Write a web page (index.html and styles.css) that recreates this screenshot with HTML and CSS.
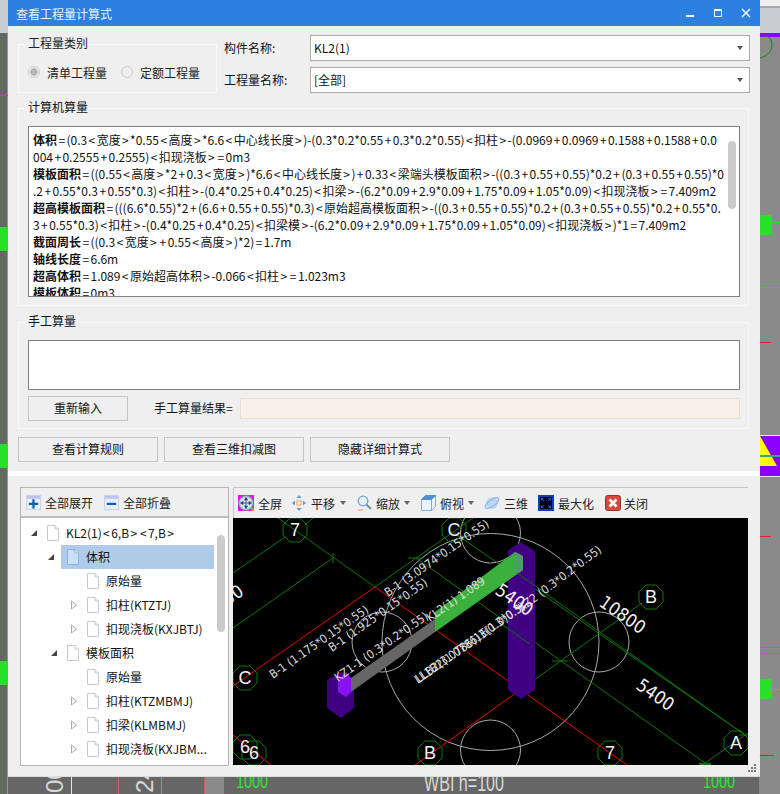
FILE: index.html
```html
<!DOCTYPE html>
<html lang="zh">
<head>
<meta charset="utf-8">
<title>查看工程量计算式</title>
<link rel="stylesheet" href="styles.css">
</head>
<body>
<svg width="0" height="0" class="defs">
  <symbol id="doc" viewBox="0 0 14 16">
    <path d="M1.5 .5H9L12.5 4V15.5H1.5Z" fill="#fff" stroke="#c3cad6"/>
    <path d="M9 .5V4H12.5" fill="#eef1f6" stroke="#c3cad6"/>
  </symbol>
  <symbol id="docsel" viewBox="0 0 14 16">
    <path d="M1.5 .5H9L12.5 4V15.5H1.5Z" fill="#c9e0f5" stroke="#8fb2d4"/>
    <path d="M9 .5V4H12.5" fill="#e6f1fb" stroke="#8fb2d4"/>
  </symbol>
  <symbol id="open" viewBox="0 0 8 8"><path d="M7 1V7H1Z" fill="#444"/></symbol>
  <symbol id="closed" viewBox="0 0 8 10"><path d="M1.5 1 6.5 5 1.5 9Z" fill="#fff" stroke="#aaa"/></symbol>
</svg>

<svg class="backdrop" viewBox="0 0 780 794">
  <rect width="780" height="794" fill="#8a8a8a"/>
  <rect x="0" y="0" width="8" height="33" fill="#c9cdd2"/>
  <rect x="0" y="33" width="8" height="761" fill="#666"/>
  <rect x="7" y="33" width="1" height="761" fill="#2fdc2f"/>
  <rect x="0" y="95" width="8" height="1" fill="#e020e0"/>
  <rect x="0" y="227" width="8" height="24" fill="#28e028"/>
  <rect x="0" y="444" width="8" height="24" fill="#28e028"/>
  <rect x="0" y="661" width="8" height="24" fill="#28e028"/>
  <rect x="760" y="0" width="20" height="6" fill="#f0f0f0"/>
  <rect x="760" y="6" width="20" height="2" fill="#a8a8a8"/>
  <rect x="760" y="8" width="20" height="25" fill="#c9cdd2"/>
  <rect x="760" y="33" width="20" height="4" fill="#8c00ff"/>
  <path d="M763 35Q773 37 772 46 771 55 760 58" fill="none" stroke="#128a12"/>
  <rect x="760" y="215" width="12" height="20" fill="#28e028"/>
  <rect x="772" y="222" width="8" height="1" fill="#28e028"/>
  <rect x="760" y="287" width="20" height="1" fill="#28dc28"/>
  <rect x="760" y="342" width="11" height="1" fill="#e82020"/>
  <rect x="760" y="435" width="20" height="1" fill="#eee"/>
  <rect x="760" y="436" width="20" height="40" fill="#8c00ff"/>
  <path d="M760 436 777 466H760Z" fill="#ffff00"/>
  <rect x="760" y="455" width="20" height="2" fill="#2fb070"/>
  <rect x="760" y="476" width="20" height="1" fill="#eee"/>
  <rect x="760" y="536" width="11" height="1" fill="#e82020"/>
  <rect x="760" y="647" width="20" height="1" fill="#e040e0"/>
  <rect x="760" y="653" width="20" height="1" fill="#e040e0"/>
  <rect x="760" y="679" width="12" height="20" fill="#28e028"/>
  <rect x="772" y="689" width="8" height="1" fill="#28e028"/>
  <rect x="760" y="755" width="14" height="1" fill="#e82020"/>
  <rect x="8" y="777" width="751" height="17" fill="#666"/>
  <rect x="204" y="777" width="20" height="17" fill="#8a8a8a"/>
  <rect x="71" y="777" width="1" height="17" fill="#dfe6df"/>
  <rect x="118" y="777" width="1" height="17" fill="#d06060"/>
  <rect x="161" y="777" width="1" height="17" fill="#2fdc2f"/>
  <rect x="204" y="777" width="1" height="17" fill="#d06060"/>
  <text x="236" y="788" class="bg-green" textLength="32" lengthAdjust="spacingAndGlyphs">1000</text>
  <text x="703" y="788" class="bg-green" textLength="32" lengthAdjust="spacingAndGlyphs">1000</text>
  <text x="424" y="791" class="bg-white" textLength="80" lengthAdjust="spacingAndGlyphs">WBI h=100</text>
  <text transform="translate(63 793) rotate(-90)" class="bg-white">00</text>
  <text transform="translate(153 793) rotate(-90)" class="bg-white">24</text>
</svg>

<div class="window">
  <header class="titlebar">
    <span class="title">查看工程量计算式</span>
    <div class="winbtns">
      <svg width="10" height="10" viewBox="0 0 10 10"><rect x="1" y="7" width="8" height="2" fill="#fff"/></svg>
      <svg width="10" height="10" viewBox="0 0 10 10"><path d="M1.5 1.5H8.5V8.5H1.5Z" fill="none" stroke="#fff"/><rect x="1" y="1" width="8" height="2" fill="#fff"/></svg>
      <svg width="10" height="10" viewBox="0 0 10 10"><path d="M1 1 9 9M9 1 1 9" stroke="#fff" stroke-width="1.4"/></svg>
    </div>
  </header>

  <div class="content">
    <div class="top">
      <div class="group type-group">
        <span class="legend">工程量类别</span>
        <label class="radio"><i class="dot checked"></i>清单工程量</label>
        <label class="radio"><i class="dot"></i>定额工程量</label>
      </div>
      <div class="fields">
        <div class="field"><span class="field-label">构件名称:</span><div class="combo"><span>KL2(1)</span><i class="caret"></i></div></div>
        <div class="field"><span class="field-label">工程量名称:</span><div class="combo"><span>[全部]</span><i class="caret"></i></div></div>
      </div>
    </div>

    <div class="group calc-group">
      <span class="legend">计算机算量</span>
      <div class="formula">
        <p><b>体积</b><u>=</u>(0.3<u>&lt;</u>宽度<u>&gt;</u>*0.55<u>&lt;</u>高度<u>&gt;</u>*6.6<u>&lt;</u>中心线长度<u>&gt;</u>)-(0.3*0.2*0.55<u>+</u>0.3*0.2*0.55)<u>&lt;</u>扣柱<u>&gt;</u>-(0.0969<u>+</u>0.0969<u>+</u>0.1588<u>+</u>0.1588<u>+</u>0.0</p>
        <p>004<u>+</u>0.2555<u>+</u>0.2555)<u>&lt;</u>扣现浇板<u>&gt;</u><u>=</u>0m3</p>
        <p><b>模板面积</b><u>=</u>((0.55<u>&lt;</u>高度<u>&gt;</u>*2<u>+</u>0.3<u>&lt;</u>宽度<u>&gt;</u>)*6.6<u>&lt;</u>中心线长度<u>&gt;</u>)<u>+</u>0.33<u>&lt;</u>梁端头模板面积<u>&gt;</u>-((0.3<u>+</u>0.55<u>+</u>0.55)*0.2<u>+</u>(0.3<u>+</u>0.55<u>+</u>0.55)*0</p>
        <p>.2<u>+</u>0.55*0.3<u>+</u>0.55*0.3)<u>&lt;</u>扣柱<u>&gt;</u>-(0.4*0.25<u>+</u>0.4*0.25)<u>&lt;</u>扣梁<u>&gt;</u>-(6.2*0.09<u>+</u>2.9*0.09<u>+</u>1.75*0.09<u>+</u>1.05*0.09)<u>&lt;</u>扣现浇板<u>&gt;</u><u>=</u>7.409m2</p>
        <p><b>超高模板面积</b><u>=</u>(((6.6*0.55)*2<u>+</u>(6.6<u>+</u>0.55<u>+</u>0.55)*0.3)<u>&lt;</u>原始超高模板面积<u>&gt;</u>-((0.3<u>+</u>0.55<u>+</u>0.55)*0.2<u>+</u>(0.3<u>+</u>0.55<u>+</u>0.55)*0.2<u>+</u>0.55*0.</p>
        <p>3<u>+</u>0.55*0.3)<u>&lt;</u>扣柱<u>&gt;</u>-(0.4*0.25<u>+</u>0.4*0.25)<u>&lt;</u>扣梁模<u>&gt;</u>-(6.2*0.09<u>+</u>2.9*0.09<u>+</u>1.75*0.09<u>+</u>1.05*0.09)<u>&lt;</u>扣现浇板<u>&gt;</u>)*1<u>=</u>7.409m2</p>
        <p><b>截面周长</b><u>=</u>((0.3<u>&lt;</u>宽度<u>&gt;</u><u>+</u>0.55<u>&lt;</u>高度<u>&gt;</u>)*2)<u>=</u>1.7m</p>
        <p><b>轴线长度</b><u>=</u>6.6m</p>
        <p><b>超高体积</b><u>=</u>1.089<u>&lt;</u>原始超高体积<u>&gt;</u>-0.066<u>&lt;</u>扣柱<u>&gt;</u><u>=</u>1.023m3</p>
        <p><b>模板体积</b><u>=</u>0m3</p>
        <i class="vscroll formula-scroll"></i>
      </div>
    </div>

    <div class="group manual-group">
      <span class="legend">手工算量</span>
      <div class="manual-input"></div>
      <div class="manual-row">
        <button class="btn reset-btn">重新输入</button>
        <span class="result-label">手工算量结果=</span>
        <div class="result-field"></div>
      </div>
    </div>

    <div class="actions">
      <button class="btn action-btn">查看计算规则</button>
      <button class="btn action-btn">查看三维扣减图</button>
      <button class="btn action-btn">隐藏详细计算式</button>
    </div>
  </div>

  <div class="divider"></div>

  <div class="lower">
    <section class="tree-pane">
      <div class="toolbar tree-toolbar">
        <span class="tool tool-expand">
          <svg width="15" height="15" viewBox="0 0 16 16"><rect width="16" height="16" fill="#fff"/><rect x=".5" y=".5" width="15" height="15" fill="#e8eefb" stroke="#c4d0ee"/><rect x="1" y="1" width="14" height="3" fill="#b9c5ee"/><path d="M3 9.5H13M8 4.5V14.5" stroke="#0a5fae" stroke-width="2.4"/></svg>
          全部展开
        </span>
        <span class="tool tool-collapse">
          <svg width="15" height="15" viewBox="0 0 16 16"><rect width="16" height="16" fill="#fff"/><rect x=".5" y=".5" width="15" height="15" fill="#e8eefb" stroke="#c4d0ee"/><rect x="1" y="1" width="14" height="3" fill="#b9c5ee"/><path d="M3 9.5H13" stroke="#0a5fae" stroke-width="2.4"/></svg>
          全部折叠
        </span>
      </div>
      <div class="tree">
        <div class="row lv0"><svg class="tw"><use href="#open"/></svg><svg class="doc"><use href="#doc"/></svg><span>KL2(1)<u>&lt;</u>6,B<u>&gt;</u><u>&lt;</u>7,B<u>&gt;</u></span></div>
        <div class="row lv1 selected"><svg class="tw"><use href="#open"/></svg><svg class="doc"><use href="#docsel"/></svg><span>体积</span></div>
        <div class="row lv2"><i class="tw"></i><svg class="doc"><use href="#doc"/></svg><span>原始量</span></div>
        <div class="row lv2"><svg class="tw"><use href="#closed"/></svg><svg class="doc"><use href="#doc"/></svg><span>扣柱(KTZTJ)</span></div>
        <div class="row lv2"><svg class="tw"><use href="#closed"/></svg><svg class="doc"><use href="#doc"/></svg><span>扣现浇板(KXJBTJ)</span></div>
        <div class="row lv1"><svg class="tw"><use href="#open"/></svg><svg class="doc"><use href="#doc"/></svg><span>模板面积</span></div>
        <div class="row lv2"><i class="tw"></i><svg class="doc"><use href="#doc"/></svg><span>原始量</span></div>
        <div class="row lv2"><svg class="tw"><use href="#closed"/></svg><svg class="doc"><use href="#doc"/></svg><span>扣柱(KTZMBMJ)</span></div>
        <div class="row lv2"><svg class="tw"><use href="#closed"/></svg><svg class="doc"><use href="#doc"/></svg><span>扣梁(KLMBMJ)</span></div>
        <div class="row lv2"><svg class="tw"><use href="#closed"/></svg><svg class="doc"><use href="#doc"/></svg><span>扣现浇板(KXJBM...</span></div>
        <i class="vscroll tree-scroll"></i>
      </div>
    </section>

    <section class="view-pane">
      <div class="toolbar view-toolbar">
        <span class="tool t-full">
          <svg width="16" height="16" viewBox="0 0 16 16"><rect width="16" height="16" fill="#f0f"/><circle cx="8" cy="8" r="7.5" fill="#b9c4d8" stroke="#6d7a92"/><circle cx="8" cy="8" r="5.5" fill="#dde4ef"/><path d="M8 3V13M3 8H13M8 2.5 6.5 5H9.5ZM8 13.5 6.5 11H9.5ZM2.5 8 5 6.5V9.5ZM13.5 8 11 6.5V9.5Z" fill="#27477e" stroke="#27477e" stroke-width=".8"/><rect x="13" y="13" width="3" height="3" fill="#d89030"/></svg>
          全屏
        </span>
        <span class="tool t-pan">
          <svg width="14" height="16" viewBox="0 0 14 16"><rect x="5" y="6" width="4" height="4" fill="#fff" stroke="#ec9a4e"/><path d="M7 0 9.5 3H4.5ZM7 16 9.5 13H4.5ZM0 8 3 5.5V10.5ZM14 8 11 5.5V10.5Z" fill="#5a9bdc"/></svg>
          平移<i class="caret small"></i>
        </span>
        <span class="tool t-zoom">
          <svg width="15" height="16" viewBox="0 0 15 16"><circle cx="6" cy="6" r="4.8" fill="#e6f1fb" stroke="#6ea4dc" stroke-width="1.3"/><path d="M9.5 9.5 14 14" stroke="#7a8aa0" stroke-width="1.8"/><path d="M1 15H6" stroke="#ec9a4e"/></svg>
          缩放<i class="caret small"></i>
        </span>
        <span class="tool t-top">
          <svg width="15" height="16" viewBox="0 0 15 16"><path d="M.5 4.5H10.5V15.5H.5ZM10.5 4.5 14.5 .5V11.5L10.5 15.5" fill="#eaf3fc" stroke="#7fa9d8"/><path d="M.5 4.5 4.5 .5H14.5L10.5 4.5Z" fill="#4f8fd8" stroke="#4f8fd8"/></svg>
          俯视<i class="caret small"></i>
        </span>
        <span class="tool t-3d">
          <svg width="16" height="16" viewBox="0 0 16 16"><circle cx="8" cy="8" r="6" fill="#bcd6f2"/><ellipse cx="8" cy="8" rx="8" ry="3.2" transform="rotate(-35 8 8)" fill="none" stroke="#8fb6e2" stroke-width="1.2"/></svg>
          三维
        </span>
        <span class="tool t-max">
          <svg width="16" height="16" viewBox="0 0 16 16"><rect width="16" height="16" fill="#000"/><rect x="1" y="1" width="14" height="14" fill="none" stroke="#0a3fc0" stroke-width="2"/><path d="M3.5 3.5 6 6M12.5 3.5 10 6M3.5 12.5 6 10M12.5 12.5 10 10" stroke="#1c60d8"/><path d="M3 3H6L3 6ZM13 3H10L13 6ZM3 13H6L3 10ZM13 13H10L13 10Z" fill="#1c60d8"/></svg>
          最大化
        </span>
        <span class="tool t-close">
          <svg width="16" height="16" viewBox="0 0 16 16"><rect x=".5" y=".5" width="15" height="15" rx="2" fill="#d8483c" stroke="#8a3a34"/><path d="M4.5 4.5 11.5 11.5M11.5 4.5 4.5 11.5" stroke="#fff" stroke-width="2.6"/></svg>
          关闭
        </span>
      </div>

      <svg class="cad" viewBox="233 518 515 247">
        <g class="c-white" fill="none">
          <circle cx="490.5" cy="642" r="108.5"/>
          <circle cx="382" cy="642" r="30"/>
          <circle cx="599" cy="642" r="30"/>
          <circle cx="490.5" cy="533" r="30"/>
          <circle cx="490.5" cy="750" r="30"/>
        </g>
        <g class="c-green" fill="none">
          <path d="M278 518 375 587"/>
          <path d="M375 587 473 518"/>
          <path d="M520 690 642 603"/>
          <path d="M233 573 285 537M305 525 313 518"/>
          <path d="M233 628 333 558M333 553V563"/>
          <path d="M416 558 705 763"/>
          <path d="M453 532 745 735"/>
          <path d="M705 763 748 733"/>
          <path d="M408 558H424M552 661H568M739 735H748"/>
          <path d="M699 764H711" stroke-width="2"/>
        </g>
        <g class="c-red" fill="none">
          <path d="M375 587 627 765"/>
          <path d="M233 686 375 587"/>
          <path d="M415 765 520 690"/>
          <path d="M233 735 271 765"/>
        </g>
        <path d="M508 550 521 542 535 551V690L521 699 508 690Z" fill="#3f0082"/>
        <path d="M327 680 341 672 354 680V708L341 718 327 708Z" fill="#3f0082"/>
        <path d="M338 680 346 672 351 678V692L346 697 338 692Z" fill="#8a10f5"/>
        <path d="M351 678 435 619V632L351 692Z" fill="#666"/>
        <path d="M435 612 515 552 523 556V570L435 632Z" fill="#3cb03c"/>
        <path d="M515 552 523 556V570L516 575Z" fill="#4f9a6f"/>
        <path d="M517 573 745 735M500 623 530 644" class="c-green" fill="none"/>
        <g>
          <polygon class="oct" points="300,518 307,525 307,535 300,542 290,542 283,535 283,525 290,518"/>
          <polygon class="oct" points="459,518 466,525 466,535 459,542 449,542 442,535 442,525 449,518"/>
          <polygon class="oct" points="250,666 257,673 257,683 250,690 240,690 233,683 233,673 240,666"/>
          <polygon class="oct" points="250,735 257,742 257,752 250,759 240,759 233,752 233,742 240,735"/>
          <polygon class="oct" points="259,741 266,748 266,758 259,765 249,765 242,758 242,748 249,741"/>
          <polygon class="oct" points="435,741 442,748 442,758 435,765 425,765 418,758 418,748 425,741"/>
          <polygon class="oct" points="656,585 663,592 663,602 656,609 646,609 639,602 639,592 646,585"/>
          <polygon class="oct" points="741,731 748,738 748,748 741,755 731,755 724,748 724,738 731,731"/>
          <polygon class="oct" points="615,741 622,748 622,758 615,765 605,765 598,758 598,748 605,741"/>
        </g>
        <g class="c-label">
          <text x="295" y="536">7</text>
          <text x="454" y="536">C</text>
          <text x="245" y="684">C</text>
          <text x="245" y="753">6</text>
          <text x="254" y="759">6</text>
          <text x="430" y="759">B</text>
          <text x="651" y="603">B</text>
          <text x="736" y="749">A</text>
          <text x="610" y="759">7</text>
        </g>
        <g class="c-small">
          <text transform="translate(273 679) rotate(-35)">B-1 (1.175*0.15*0.55)</text>
          <text transform="translate(332 652) rotate(-35)">B-1 (1.925*0.15*0.55)</text>
          <text transform="translate(388 597) rotate(-35)">B-1 (3.0974*0.15*0.55)</text>
          <text transform="translate(338 682) rotate(-35)">KZ1-1 (0.3*0.2*0.55)</text>
          <text transform="translate(430 622) rotate(-35)">KL2(1) 1.089</text>
          <text transform="translate(522 612) rotate(-37)">KZ2 (0.3*0.2*0.55)</text>
          <text transform="translate(418 684) rotate(-35)">LL1B2(1.0786)3(0.3*0.3)</text>
          <text transform="translate(419 683) rotate(-35)">LLB2(3.0786)1E(1.0)0.5</text>
        </g>
        <g class="c-dim">
          <text transform="translate(494 593) rotate(35)">5400</text>
          <text transform="translate(635 688) rotate(35)">5400</text>
          <text transform="translate(598 605) rotate(35)">10800</text>
          <text transform="translate(228 606) rotate(-35)">50</text>
        </g>
      </svg>
    </section>
  </div>

  <svg class="grip" width="8" height="8" viewBox="0 0 8 8"><path d="M6 0H8V2H6ZM3 3H5V5H3ZM6 3H8V5H6ZM0 6H2V8H0ZM3 6H5V8H3ZM6 6H8V8H6Z" fill="#777"/></svg>
</div>
</body>
</html>
```

FILE: styles.css
```css
* { box-sizing: border-box; }
html, body { margin: 0; padding: 0; }
body {
  width: 780px;
  height: 794px;
  overflow: hidden;
  position: relative;
  background: #8a8a8a;
  font-family: "Noto Sans CJK SC", "Noto Sans", sans-serif;
  font-size: 12px;
  line-height: 17px;
  color: #111;
}
u { text-decoration: none; padding: 0 1.4px; }
.defs { position: absolute; }
.backdrop { position: absolute; left: 0; top: 0; width: 780px; height: 794px; }
.bg-green { font: 20px "Liberation Sans", sans-serif; fill: #2fe62f; }
.bg-white { font: 24px "Liberation Sans", sans-serif; fill: #d8d8d8; }

.window {
  position: absolute;
  left: 8px;
  top: 0;
  width: 752px;
  height: 777px;
  background: #efefef;
  border-bottom: 1px solid #dcdcdc;
}
.titlebar {
  height: 26px;
  background: #2d7fe0;
  color: #eaf3ff;
  display: flex;
  align-items: center;
  justify-content: space-between;
  padding: 0 9px 0 8px;
}
.title { font-size: 12px; }
.winbtns { display: flex; gap: 18px; }

.content { padding: 9px 10px 0; }
.top { display: flex; }
.group {
  position: relative;
  border: 1.5px solid #f8f8f8;
}
.legend {
  position: absolute;
  left: 8px;
  top: -11px;
  padding: 0 1px;
  background: #efefef;
}
.type-group {
  width: 199px;
  height: 49px;
  margin-top: 9px;
  display: flex;
  align-items: center;
  padding: 7px 0 0 9px;
  gap: 14px;
  color: #222;
}
.radio { display: flex; align-items: center; gap: 7px; }
.dot {
  width: 12px;
  height: 12px;
  border-radius: 50%;
  border: 1px solid #c9c9c9;
  background: #efefef;
  display: block;
}
.dot.checked { background: radial-gradient(circle, #b5b5b5 0 3.5px, #efefef 4px); }
.fields {
  margin-left: 7px;
  width: 526px;
  display: flex;
  flex-direction: column;
  gap: 6px;
}
.field { display: flex; align-items: center; height: 26px; }
.field-label { width: 86px; margin-bottom: 2px; }
.combo {
  flex: 1;
  height: 26px;
  background: #fff;
  border: 1px solid #ababab;
  display: flex;
  align-items: center;
  justify-content: space-between;
  padding: 0 6px 0 3px;
}
.combo span { margin-bottom: 2px; }
.caret {
  display: block;
  width: 0;
  height: 0;
  border-left: 3px solid transparent;
  border-right: 3px solid transparent;
  border-top: 4px solid #555;
}
.caret.small { margin-left: 0; border-top-color: #666; }

.calc-group {
  width: 731px;
  height: 198px;
  margin-top: 15px;
  padding: 17px 0 0 9px;
}
.formula {
  position: relative;
  width: 712px;
  height: 171px;
  border: 1px solid #7f7f7f;
  background: #fff;
  padding: 4px 0 0 4px;
  overflow: hidden;
}
.formula p {
  margin: 0;
  height: 17px;
  white-space: nowrap;
  color: #111;
}
.formula b { font-weight: 700; }
.vscroll {
  position: absolute;
  width: 8px;
  background: #cbcbcb;
  border-radius: 4px;
  display: block;
}
.formula-scroll { right: 3px; top: 14px; height: 68px; }

.manual-group {
  width: 731px;
  height: 107px;
  margin-top: 16px;
  padding: 17px 0 0 9px;
}
.manual-input {
  width: 712px;
  height: 50px;
  background: #fff;
  border: 1px solid #7f7f7f;
}
.manual-row { display: flex; align-items: center; margin-top: 6px; }
.btn {
  font: inherit;
  color: #111;
  background: #efefef;
  border: 1px solid #c4c4c4;
  padding: 0 0 2px;
  height: 25px;
}
.reset-btn { width: 100px; }
.result-label { margin-left: 26px; width: 86px; margin-bottom: 2px; }
.result-field {
  width: 500px;
  height: 21px;
  background: #f8efe6;
  border: 1px solid #e4e0da;
}
.actions { display: flex; gap: 6px; margin-top: 8px; }
.action-btn { width: 140px; }

.divider { height: 5px; background: #fff; margin-top: 9px; }
.lower { display: flex; gap: 4px; padding: 11px 0 0 12px; }

.tree-pane {
  width: 209px;
  height: 279px;
  border: 1px solid #b4b4b4;
  display: flex;
  flex-direction: column;
}
.toolbar {
  height: 30px;
  display: flex;
  align-items: center;
  color: #222;
  flex: none;
}
.tree-toolbar { border-bottom: 2px solid #bdbdbd; padding-left: 5px; }
.tool { display: flex; align-items: center; gap: 4px; white-space: nowrap; }
.tool-collapse { margin-left: 11px; }
.tree {
  position: relative;
  flex: 1;
  background: #fff;
  padding-top: 3px;
  overflow: hidden;
}
.row {
  height: 24px;
  display: flex;
  align-items: center;
  white-space: nowrap;
  color: #111;
}
.row span { margin-bottom: 2px; }
.tw { width: 8px; height: 10px; display: block; flex: none; }
.doc { width: 14px; height: 16px; display: block; flex: none; margin: 0 6px 0 8px; }
.lv0 { padding-left: 6px; margin-left: 3px; }
.lv1 { padding-left: 26px; margin-left: 3px; }
.lv2 { padding-left: 46px; margin-left: 3px; }
.selected { background: #b0cbe9; margin-left: 40px; padding-left: 0; width: 153px; }
.selected .tw { margin-left: -14px; }
.selected .doc { margin-left: 11px; }
.tree-scroll { left: 196px; top: 17px; height: 97px; }

.view-pane {
  width: 515px;
  height: 279px;
  display: flex;
  flex-direction: column;
  border-top: 1px solid #c4c4c4;
}
.view-toolbar { height: 30px; box-shadow: inset 1px 0 0 #c4c4c4; }
.view-toolbar .tool:first-child { margin-left: 5px; }
.t-pan { margin-left: 10px; gap: 5px; }
.t-zoom { margin-left: 11px; }
.t-top { margin-left: 11px; }
.t-3d { margin-left: 10px; }
.t-max { margin-left: 10px; }
.t-close { margin-left: 11px; gap: 3px; }
.cad { display: block; width: 515px; height: 247px; background: #000; flex: none; }
.c-white { stroke: #a8a8a8; stroke-width: 1; }
.c-green { stroke: #0c760c; stroke-width: 1; }
.c-red { stroke: #e60000; stroke-width: 1; }
.oct { fill: none; stroke: #0a7a0a; stroke-width: 1; }
.c-label { font: 18px "Liberation Sans", sans-serif; fill: #f2f2f2; text-anchor: middle; }
.c-small { font: 11.8px "DejaVu Sans Condensed", "DejaVu Sans", sans-serif; fill: #dcdcdc; }
.c-dim { font: 18px "DejaVu Sans Condensed", "DejaVu Sans", sans-serif; fill: #f2f2f2; }
.grip { position: absolute; right: 4px; bottom: 4px; }
```
